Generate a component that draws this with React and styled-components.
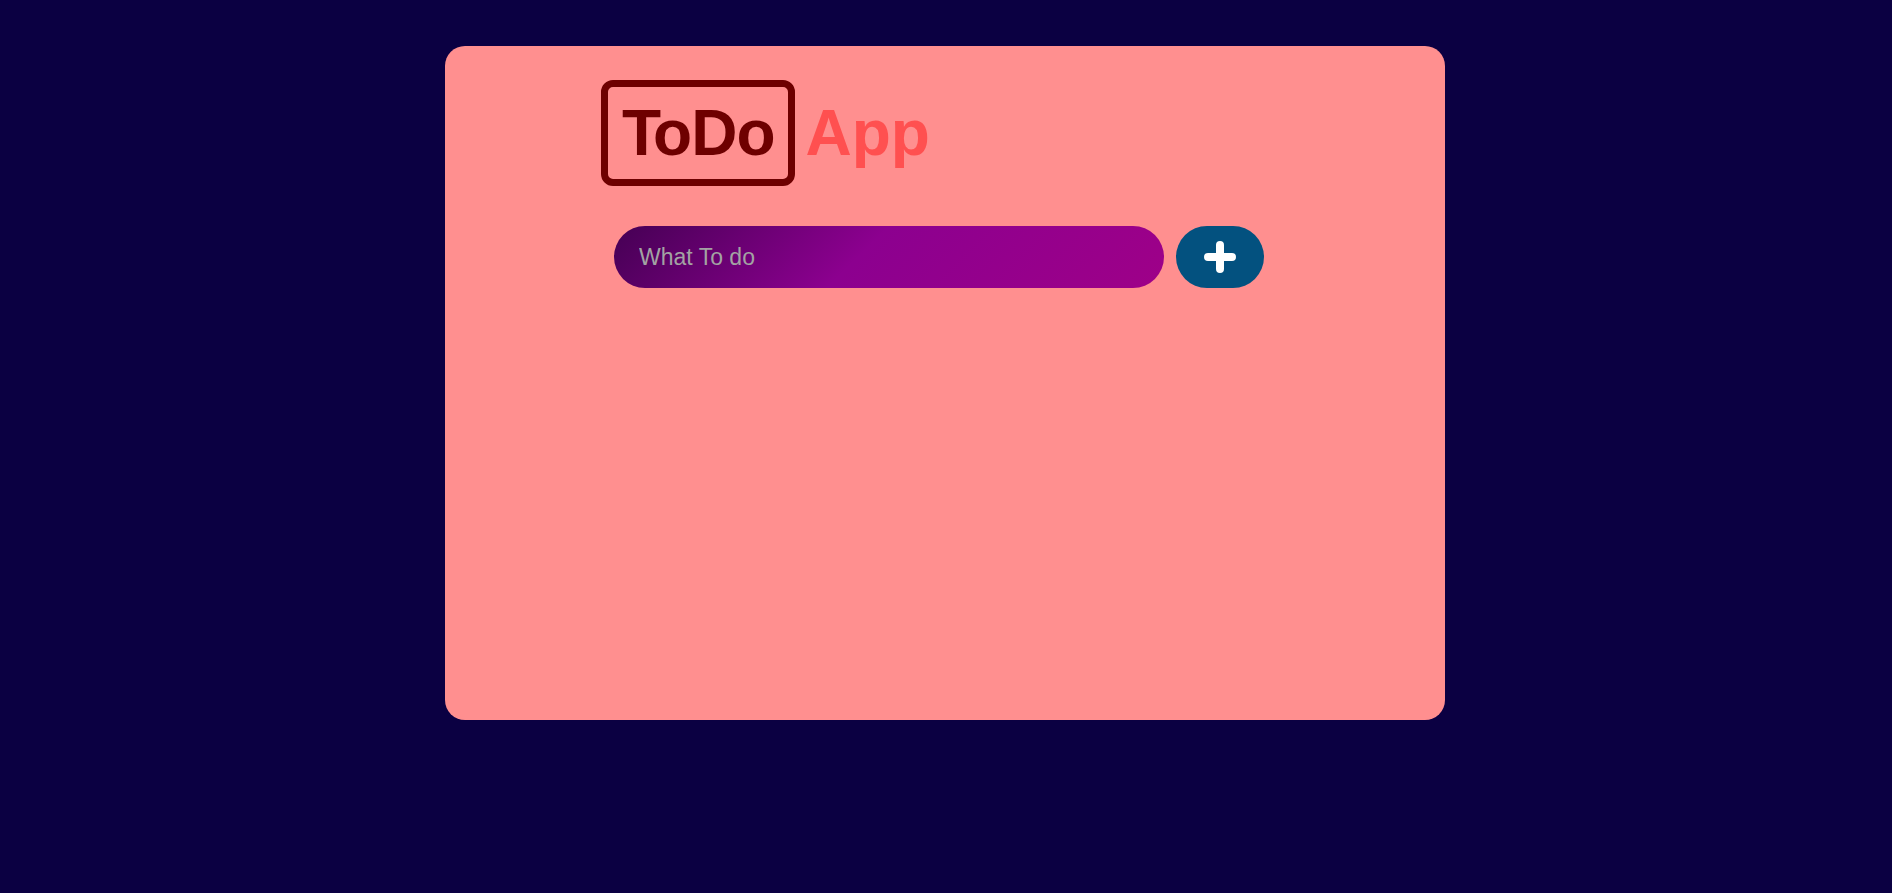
import React from 'react'
import styled, { createGlobalStyle } from 'styled-components'

const Global = createGlobalStyle`
    body{
        margin: 0;
        background: #0b0042;
        font-family: "Liberation Sans", Arial, sans-serif;
    }
`

const Card = styled.div`
    width: 1000px;
    height: 674px;
    margin: 46px auto 0;
    box-sizing: border-box;
    padding: 34px 0 0 156px;
    background: #ff8f8f;
    border-radius: 20px;
    transform: translateX(-1px);
`

const Title = styled.h1`
    display: flex;
    align-items: baseline;
    gap: 11px;
    margin: 0;
    font-size: 64px;
    font-weight: 700;
    line-height: normal;

    .box{
        color: #6e0000;
        border: 7px solid #6e0000;
        border-radius: 12px;
        padding: 9px 13px 9px 14px;
        letter-spacing: -1px;
    }
    .kern{
        letter-spacing: -8px;
    }
    .app{
        color: #ff5050;
    }
`

const Form = styled.form`
    display: flex;
    gap: 12px;
    margin: 40px 0 0 13px;
`

const Input = styled.input`
    width: 550px;
    height: 62px;
    box-sizing: border-box;
    border: none;
    outline: none;
    border-radius: 31px;
    padding: 0 25px;
    font-family: "Liberation Sans", Arial, sans-serif;
    font-size: 23px;
    color: #fff;
    caret-color: #fff;
    background: linear-gradient(135deg, #450054 0%, #8c008f 45%, #9e0088 100%);

    &::placeholder{
        color: #a3a3a3;
    }
`

const AddButton = styled.button`
    width: 88px;
    height: 62px;
    border: none;
    border-radius: 31px;
    background: #03517f;
    display: flex;
    align-items: center;
    justify-content: center;
    cursor: pointer;
    padding: 0;
`

function App() {
    return (
        <>
            <Global />
            <Card>
                <Title>
                    <span className="box"><span className="kern">T</span>oDo</span>
                    <span className="app">App</span>
                </Title>
                <Form onSubmit={e => e.preventDefault()}>
                    <Input placeholder="What To do" autoFocus />
                    <AddButton type="submit">
                        <svg width="34" height="34" viewBox="0 0 34 34">
                            <path d="M17 5v24M5 17h24" stroke="#fff" strokeWidth="8" strokeLinecap="round" />
                        </svg>
                    </AddButton>
                </Form>
            </Card>
        </>
    )
}

export default App
